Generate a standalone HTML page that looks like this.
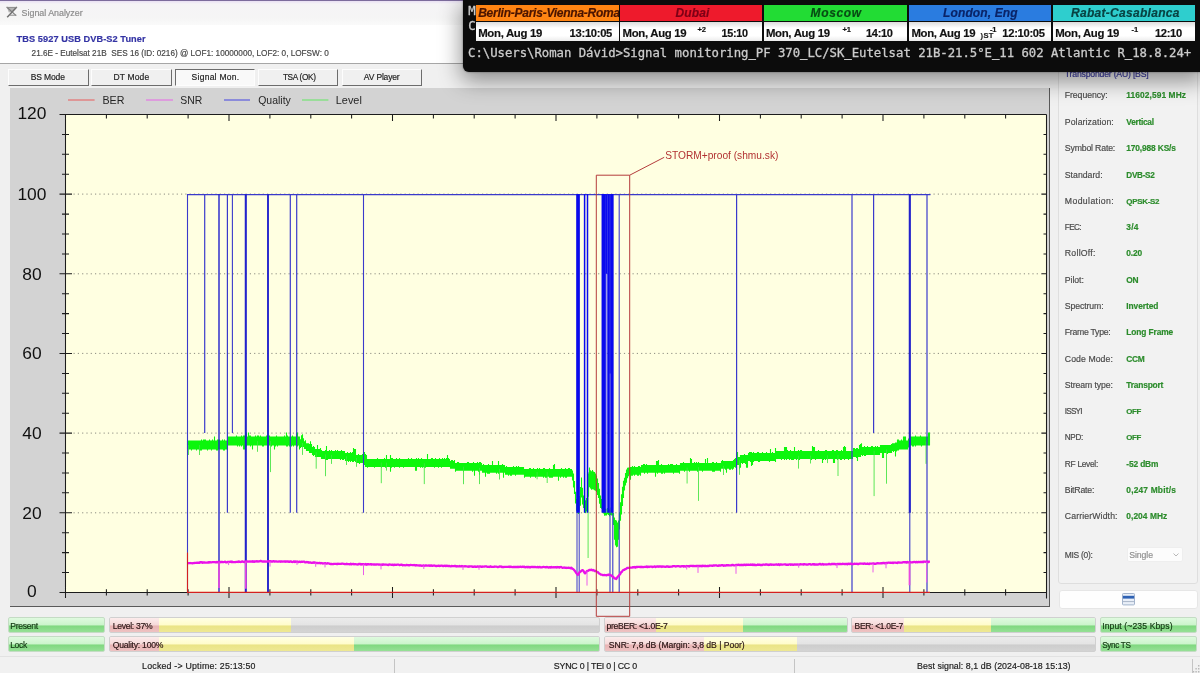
<!DOCTYPE html>
<html><head><meta charset="utf-8"><title>Signal Analyzer</title>
<style>
html,body{margin:0;padding:0}
body{width:1200px;height:673px;position:relative;overflow:hidden;background:#f0f0f0;font-family:"Liberation Sans",Arial,sans-serif;font-size:9px;color:#222}
div{position:absolute;box-sizing:border-box;white-space:pre}
.t{margin:0;-webkit-text-stroke-width:.18px}
#root{left:0;top:0;width:1200px;height:673px;overflow:hidden;will-change:transform}
.clip{width:141px;overflow:hidden}
.mono{-webkit-text-stroke:0.3px #c8c8c8}
#title{left:0;top:0;width:1200px;height:25px;background:linear-gradient(#e9e0f4 0,#f5f4f6 3px,#f5f5f5 70%,#fafafa 100%);border-top:1px solid #7c6c9c}
#hdr{left:0;top:25px;width:1200px;height:39px;background:#fff;border-bottom:1px solid #a6a6a6}
.btn{top:68.6px;height:17.4px;background:#f0f0f0;border:1px solid;border-color:#fdfdfd #6c6c6c #6c6c6c #fdfdfd}
.btn.sel{background:#f9f9f9;border-color:#6c6c6c #fdfdfd #fdfdfd #6c6c6c}
#panel{left:9.6px;top:88.4px;width:1040.5px;height:518.6px;background:#d3d3d3;border-right:1.4px solid #5a5a5a;border-bottom:1.4px solid #5a5a5a}
#chart{position:absolute;left:0;top:0}
#grp{left:1058px;top:66px;width:140px;height:518px;border:1px solid #dedede;border-radius:3px;background:#f2f2f2}
#combo{left:1126.8px;top:547.4px;width:56.6px;height:14.4px;background:#fcfcfc;border:1px solid #eeeeee;border-radius:2px}
#wbtn{left:1059.2px;top:590px;width:138.4px;height:19px;background:#fefefe;border:1px solid #e6e6e6;border-radius:3px}
.pb{height:15.5px;border:1px solid #d0d0d0;border-radius:2px;overflow:hidden;background:linear-gradient(#ebebeb 0,#e4e4e4 48%,#cdcdcd 58%,#d4d4d4 100%)}
.pb i{position:absolute;top:0;height:100%;display:block}
.g{background:linear-gradient(#dffadf 0,#ccf4cc 48%,#80d880 58%,#96e096 100%)}
.pb.g{border-color:#c4dcc4;background:linear-gradient(#dffadf 0,#ccf4cc 48%,#80d880 58%,#96e096 100%)}
.r{background:linear-gradient(#fcecec 0,#f6dada 48%,#e8b4b4 58%,#eec2c2 100%)}
.y{background:linear-gradient(#ffffe4 0,#fffccc 48%,#eae486 58%,#eee894 100%)}
#status{left:0;top:656px;width:1200px;height:17px;border-top:1px solid #e2e2e2;background:#f1f1f1}
.sep{width:1px;background:#c4c4c4;top:659px;height:14px}
#term{left:463px;top:0;width:740px;height:71.7px;background:#0c0c0c;border-radius:0 0 0 6px;box-shadow:0 7px 22px 2px rgba(0,0,0,.42),0 0 2px rgba(0,0,0,.5)}
.cn{top:4.6px;height:16.2px}
.cd{top:22px;height:18.8px;background:linear-gradient(#dcdcdc,#fff 32%,#fff 72%,#ececec)}
</style></head><body><div id="root">
<div id="title"><svg style="position:absolute;left:5px;top:5px" width="14" height="14" viewBox="5 6 14 14"><path d="M7 7.6L16.4 7.6L12.2 11.8L8.8 12.4Z" fill="#b4b4b4"/><path d="M16.8 7L7.2 17.2" stroke="#6e6e6e" stroke-width="1.5" fill="none"/><path d="M6.6 7L16.2 15.6" stroke="#7c7c7c" stroke-width="1.1" fill="none"/><path d="M9.6 15.2H16.2M6.8 7.4H16.6" stroke="#8a8a8a" stroke-width="1" fill="none"/></svg></div>
<div class="t" style='left:21.6px;top:8px;font-size:8.9px;line-height:10px;color:#8c8c8c;letter-spacing:-0.013px'>Signal Analyzer</div>
<div id="hdr"></div>
<div class="t" style='left:16.6px;top:34px;font-size:9.2px;line-height:10px;color:#3434a4;letter-spacing:0.083px;font-weight:bold'>TBS 5927 USB DVB-S2 Tuner</div>
<div class="t" style='left:31.6px;top:49px;font-size:8.2px;line-height:9px;color:#484848'>21.6E - Eutelsat 21B  SES 16 (ID: 0216) @ LOF1: 10000000, LOF2: 0, LOFSW: 0</div>
<div class="btn" style="left:7.6px;width:81.0px"></div><div class="t" style='left:30.7px;top:72px;font-size:8.5px;line-height:10px;color:#222;letter-spacing:-0.118px'>BS Mode</div><div class="btn" style="left:91px;width:80.6px"></div><div class="t" style='left:113.4px;top:72px;font-size:8.5px;line-height:10px;color:#222;letter-spacing:0.167px'>DT Mode</div><div class="btn sel" style="left:174.8px;width:80.39999999999998px"></div><div class="t" style='left:191.6px;top:72px;font-size:8.5px;line-height:10px;color:#222;letter-spacing:0.258px'>Signal Mon.</div><div class="btn" style="left:258.4px;width:80.0px"></div><div class="t" style='left:282.9px;top:73px;font-size:8.24px;line-height:9px;color:#222;letter-spacing:-0.300px'>TSA (OK)</div><div class="btn" style="left:341.8px;width:80.19999999999999px"></div><div class="t" style='left:363.8px;top:72px;font-size:8.5px;line-height:10px;color:#222;letter-spacing:-0.161px'>AV Player</div>
<div id="panel"></div>
<div id="grp"></div>
<div class="t" style='left:1064.8px;top:90px;font-size:8.7px;line-height:10px;color:#4a4a4a;letter-spacing:-0.070px'>Frequency:</div><div class="t" style='left:1126.3px;top:90px;font-size:8.4px;line-height:10px;color:#2c8c2c;letter-spacing:0.082px;font-weight:bold'>11602,591 MHz</div><div class="t" style='left:1064.8px;top:117px;font-size:8.7px;line-height:10px;color:#4a4a4a;letter-spacing:0.095px'>Polarization:</div><div class="t" style='left:1126.3px;top:117px;font-size:8.4px;line-height:10px;color:#2c8c2c;letter-spacing:-0.295px;font-weight:bold'>Vertical</div><div class="t" style='left:1064.8px;top:143px;font-size:8.7px;line-height:10px;color:#4a4a4a;letter-spacing:-0.153px'>Symbol Rate:</div><div class="t" style='left:1126.3px;top:143px;font-size:8.4px;line-height:10px;color:#2c8c2c;letter-spacing:-0.142px;font-weight:bold'>170,988 KS/s</div><div class="t" style='left:1064.8px;top:170px;font-size:8.7px;line-height:10px;color:#4a4a4a;letter-spacing:0.013px'>Standard:</div><div class="t" style='left:1126.3px;top:171px;font-size:8.19px;line-height:9px;color:#2c8c2c;letter-spacing:-0.300px;font-weight:bold'>DVB-S2</div><div class="t" style='left:1064.8px;top:196px;font-size:8.7px;line-height:10px;color:#4a4a4a;letter-spacing:0.388px'>Modulation:</div><div class="t" style='left:1126.3px;top:197px;font-size:7.98px;line-height:9px;color:#2c8c2c;letter-spacing:-0.300px;font-weight:bold'>QPSK-S2</div><div class="t" style='left:1064.8px;top:223px;font-size:8.18px;line-height:9px;color:#4a4a4a;letter-spacing:-0.603px'>FEC:</div><div class="t" style='left:1126.3px;top:222px;font-size:8.4px;line-height:10px;color:#2c8c2c;letter-spacing:0.177px;font-weight:bold'>3/4</div><div class="t" style='left:1064.8px;top:248px;font-size:8.7px;line-height:10px;color:#4a4a4a;letter-spacing:0.265px'>RollOff:</div><div class="t" style='left:1126.3px;top:248px;font-size:8.4px;line-height:10px;color:#2c8c2c;letter-spacing:-0.175px;font-weight:bold'>0.20</div><div class="t" style='left:1064.8px;top:275px;font-size:8.7px;line-height:10px;color:#4a4a4a;letter-spacing:-0.060px'>Pilot:</div><div class="t" style='left:1126.3px;top:275px;font-size:8.39px;line-height:10px;color:#2c8c2c;letter-spacing:-0.300px;font-weight:bold'>ON</div><div class="t" style='left:1064.8px;top:301px;font-size:8.7px;line-height:10px;color:#4a4a4a;letter-spacing:-0.105px'>Spectrum:</div><div class="t" style='left:1126.3px;top:301px;font-size:8.4px;line-height:10px;color:#2c8c2c;letter-spacing:-0.066px;font-weight:bold'>Inverted</div><div class="t" style='left:1064.8px;top:327px;font-size:8.7px;line-height:10px;color:#4a4a4a;letter-spacing:-0.268px'>Frame Type:</div><div class="t" style='left:1126.3px;top:327px;font-size:8.4px;line-height:10px;color:#2c8c2c;letter-spacing:-0.109px;font-weight:bold'>Long Frame</div><div class="t" style='left:1064.8px;top:354px;font-size:8.7px;line-height:10px;color:#4a4a4a;letter-spacing:0.081px'>Code Mode:</div><div class="t" style='left:1126.3px;top:354px;font-size:8.39px;line-height:10px;color:#2c8c2c;letter-spacing:-0.300px;font-weight:bold'>CCM</div><div class="t" style='left:1064.8px;top:380px;font-size:8.7px;line-height:10px;color:#4a4a4a;letter-spacing:-0.100px'>Stream type:</div><div class="t" style='left:1126.3px;top:380px;font-size:8.4px;line-height:10px;color:#2c8c2c;letter-spacing:-0.203px;font-weight:bold'>Transport</div><div class="t" style='left:1064.8px;top:407px;font-size:8.18px;line-height:9px;color:#4a4a4a;letter-spacing:-0.797px'>ISSYI</div><div class="t" style='left:1126.3px;top:407px;font-size:7.9px;line-height:9px;color:#2c8c2c;letter-spacing:-0.378px;font-weight:bold'>OFF</div><div class="t" style='left:1064.8px;top:433px;font-size:8.18px;line-height:9px;color:#4a4a4a;letter-spacing:-0.348px'>NPD:</div><div class="t" style='left:1126.3px;top:433px;font-size:7.9px;line-height:9px;color:#2c8c2c;letter-spacing:-0.378px;font-weight:bold'>OFF</div><div class="t" style='left:1064.8px;top:459px;font-size:8.39px;line-height:10px;color:#4a4a4a;letter-spacing:-0.300px'>RF Level:</div><div class="t" style='left:1126.3px;top:459px;font-size:8.4px;line-height:10px;color:#2c8c2c;letter-spacing:-0.146px;font-weight:bold'>-52 dBm</div><div class="t" style='left:1064.8px;top:485px;font-size:8.7px;line-height:10px;color:#4a4a4a;letter-spacing:-0.201px'>BitRate:</div><div class="t" style='left:1126.3px;top:485px;font-size:8.4px;line-height:10px;color:#2c8c2c;letter-spacing:0.184px;font-weight:bold'>0,247 Mbit/s</div><div class="t" style='left:1064.8px;top:511px;font-size:8.7px;line-height:10px;color:#4a4a4a;letter-spacing:0.130px'>CarrierWidth:</div><div class="t" style='left:1126.3px;top:511px;font-size:8.4px;line-height:10px;color:#2c8c2c;letter-spacing:0.059px;font-weight:bold'>0,204 MHz</div><div class="t" style='left:1064.8px;top:550px;font-size:8.46px;line-height:10px;color:#4a4a4a;letter-spacing:-0.300px'>MIS (0):</div><div class="t" style='left:1064.8px;top:69px;font-size:8.7px;line-height:10px;color:#3a3aa0;letter-spacing:-0.207px'>Transponder (AU) [BS]</div>
<div id="combo"><svg style="position:absolute;right:3.5px;top:4.5px" width="6" height="4" viewBox="0 0 6 4"><path d="M0.5 0.5 L3 3 L5.5 0.5" stroke="#b0b0b0" stroke-width="0.9" fill="none"/></svg></div>
<div class="t" style='left:1129.2px;top:550px;font-size:8.7px;line-height:10px;color:#909090;letter-spacing:-0.065px'>Single</div>
<div id="wbtn"><svg style="position:absolute;left:61.6px;top:2.4px" width="13" height="12.4" viewBox="0 0 13 12.4"><rect x="0.5" y="0.5" width="12" height="11.4" rx="0.8" fill="#e9eff8" stroke="#a3b4cc"/><rect x="0.9" y="2.8" width="11.2" height="2.8" fill="#2f62b4"/><path d="M1 8.6H12" stroke="#a9b6c8"/></svg></div>
<svg id="chart" width="1200" height="673" viewBox="0 0 1200 673">
<rect x="65.5" y="114.5" width="981.0" height="477.9" fill="#ffffe1"/>
<path d="M73.5 512.8H1041.5M73.5 433.1H1041.5M73.5 353.4H1041.5M73.5 273.8H1041.5M73.5 194.1H1041.5" stroke="#8c8c80" stroke-width="1" stroke-dasharray="1.2 3.1" fill="none"/>
<path d="M65.5 114.5H1046.5M65.5 114.5V597.9M1046.5 114.5V598.4M59.5 592.4H1046.5M65.5 586.9V597.9M65.5 114.5V121M106.4 589.2V595.6M106.4 114.5V118.5M147.2 589.2V595.6M147.2 114.5V118.5M188.1 589.2V595.6M188.1 114.5V118.5M229 586.9V597.9M229 114.5V121M269.9 589.2V595.6M269.9 114.5V118.5M310.8 589.2V595.6M310.8 114.5V118.5M351.6 589.2V595.6M351.6 114.5V118.5M392.5 586.9V597.9M392.5 114.5V121M433.4 589.2V595.6M433.4 114.5V118.5M474.2 589.2V595.6M474.2 114.5V118.5M515.1 589.2V595.6M515.1 114.5V118.5M556 586.9V597.9M556 114.5V121M596.9 589.2V595.6M596.9 114.5V118.5M637.8 589.2V595.6M637.8 114.5V118.5M678.6 589.2V595.6M678.6 114.5V118.5M719.5 586.9V597.9M719.5 114.5V121M760.4 589.2V595.6M760.4 114.5V118.5M801.2 589.2V595.6M801.2 114.5V118.5M842.1 589.2V595.6M842.1 114.5V118.5M883 586.9V597.9M883 114.5V121M923.9 589.2V595.6M923.9 114.5V118.5M964.8 589.2V595.6M964.8 114.5V118.5M1005.6 589.2V595.6M1005.6 114.5V118.5M1046.5 586.9V597.9M1046.5 114.5V121M59.5 592.4H72M1041.5 592.4H1046.5M62 572.5H69M1043.5 572.5H1046.5M62 552.6H69M1043.5 552.6H1046.5M62 532.7H69M1043.5 532.7H1046.5M59.5 512.8H72M1041.5 512.8H1046.5M62 492.8H69M1043.5 492.8H1046.5M62 472.9H69M1043.5 472.9H1046.5M62 453H69M1043.5 453H1046.5M59.5 433.1H72M1041.5 433.1H1046.5M62 413.2H69M1043.5 413.2H1046.5M62 393.3H69M1043.5 393.3H1046.5M62 373.4H69M1043.5 373.4H1046.5M59.5 353.4H72M1041.5 353.4H1046.5M62 333.5H69M1043.5 333.5H1046.5M62 313.6H69M1043.5 313.6H1046.5M62 293.7H69M1043.5 293.7H1046.5M59.5 273.8H72M1041.5 273.8H1046.5M62 253.9H69M1043.5 253.9H1046.5M62 234H69M1043.5 234H1046.5M62 214.1H69M1043.5 214.1H1046.5M59.5 194.1H72M1041.5 194.1H1046.5M62 174.2H69M1043.5 174.2H1046.5M62 154.3H69M1043.5 154.3H1046.5M62 134.4H69M1043.5 134.4H1046.5M59.5 114.5H72M1041.5 114.5H1046.5" stroke="#1c1c1c" stroke-width="1.05" fill="none"/>
<g font-family='"Liberation Sans",Arial,sans-serif' font-size="17.4" text-anchor="middle" fill="#111"><text x="31.9" y="596.5">0</text><text x="31.9" y="518.5">20</text><text x="31.9" y="438.8">40</text><text x="31.9" y="359.1">60</text><text x="31.9" y="279.5">80</text><text x="31.9" y="199.8">100</text><text x="31.9" y="119.1">120</text></g>
<path d="M187.5 440.6V449.5M188.5 440.6V449.5M189.5 440.6V449.5M190.5 440.6V449.5M191.5 440.6V450.5M192.5 440.6V449.5M193.5 440.6V449.5M194.5 440.6V449.5M195.5 440.6V449.5M196.5 440.6V450.5M197.5 440.6V449.5M198.5 440.6V449.5M199.5 440.6V450.5M200.5 440.6V450.5M201.5 439.6V450.5M202.5 440.6V449.5M203.5 439.6V449.5M204.5 439.6V449.5M205.5 439.6V449.5M206.5 440.6V449.5M207.5 440.6V450.5M208.5 440.6V449.5M209.5 439.6V449.5M210.5 440.6V449.5M211.5 440.6V450.5M212.5 439.6V449.5M213.5 440.6V449.5M214.5 436.6V449.5M215.5 440.6V449.5M216.5 440.6V450.5M217.5 439.6V450.5M218.5 439.6V449.5M219.5 439.6V449.5M220.5 440.6V449.5M221.5 440.6V449.5M222.5 439.6V449.5M223.5 440.6V450.5M224.5 439.6V450.5M225.5 440.6V449.5M226.5 440.6V449.5M227.5 440.6V449.5M228.5 436.6V445.5M229.5 436.6V445.5M230.5 436.6V445.5M231.5 436.6V445.5M232.5 436.6V445.5M233.5 436.6V445.5M234.5 436.6V445.5M235.5 436.6V445.5M236.5 435.6V445.5M237.5 436.6V446.5M238.5 436.6V445.5M239.5 436.6V446.5M240.5 436.6V445.5M241.5 435.6V446.5M242.5 436.6V445.5M243.5 435.6V449.5M244.5 435.6V449.5M245.5 436.6V445.5M246.5 432.6V446.5M247.5 436.6V445.5M248.5 432.6V445.5M249.5 435.6V445.5M250.5 435.6V446.5M251.5 436.6V445.5M252.5 436.6V449.5M253.5 436.6V445.5M254.5 436.6V445.5M255.5 435.6V445.5M256.5 436.6V445.5M257.5 435.6V445.5M258.5 435.6V445.5M259.5 436.6V445.5M260.5 435.6V445.5M261.5 436.6V445.5M262.5 436.6V446.5M263.5 436.6V446.5M264.5 436.6V445.5M265.5 436.6V445.5M266.5 435.6V445.5M267.5 435.6V445.5M268.5 436.6V446.5M269.5 435.6V445.5M270.5 436.6V445.5M271.5 436.6V446.5M272.5 436.6V445.5M273.5 436.6V445.5M274.5 436.6V449.5M275.5 436.6V446.5M276.5 435.6V445.5M277.5 436.6V446.5M278.5 436.6V445.5M279.5 436.6V445.5M280.5 436.6V445.5M281.5 436.6V445.5M282.5 436.6V445.5M283.5 436.6V445.5M284.5 435.6V445.5M285.5 436.6V445.5M286.5 432.6V446.5M287.5 435.6V446.5M288.5 436.6V445.5M289.5 436.6V446.5M290.5 436.6V445.5M291.5 436.6V446.5M292.5 435.6V445.5M293.5 436.6V446.5M294.5 436.6V445.5M295.5 436.6V445.5M296.5 432.6V445.5M297.5 432.6V446.5M298.5 436.6V445.5M299.5 436.6V449.5M300.5 439.2V447.9M301.5 435.2V446.9M302.5 434.2V446.9M303.5 438.2V446.9M304.5 441.2V448.9M305.5 440.2V448.9M306.5 443.2V450.9M307.5 443.2V450.9M308.5 443.2V450.9M309.5 444.1V452.9M310.5 441.2V452.9M311.5 444.1V452.9M312.5 447.1V454.9M313.5 446.1V455.9M314.5 447.1V454.9M315.5 449.1V456.9M316.5 449.1V456.9M317.5 445.1V456.9M318.5 449.1V456.9M319.5 449.1V456.9M320.5 448.1V456.9M321.5 450.1V458.9M322.5 451.1V458.9M323.5 451.1V458.9M324.5 451.1V458.9M325.5 450.1V459.9M326.5 446.1V459.9M327.5 451.1V459.9M328.5 451.1V458.9M329.5 450.1V458.9M330.5 451.1V458.9M331.5 450.1V458.9M332.5 451.1V458.9M333.5 451.1V458.9M334.5 451.1V458.9M335.5 450.1V458.9M336.5 451.1V458.9M337.5 450.1V458.9M338.5 451.1V458.9M339.5 451.1V458.9M340.5 451.1V459.9M341.5 450.1V458.9M342.5 451.1V459.9M343.5 451.1V459.9M344.5 451.1V458.9M345.5 453.1V460.9M346.5 453.1V460.9M347.5 452.1V460.9M348.5 453.1V461.9M349.5 453.1V460.9M350.5 452.1V461.9M351.5 453.1V460.9M352.5 452.1V461.9M353.5 448.1V461.9M354.5 449.1V460.9M355.5 449.1V461.9M356.5 455.1V462.9M357.5 455.1V462.9M358.5 454.1V462.9M359.5 455.1V463.9M360.5 455.1V462.9M361.5 455.1V462.9M362.5 454.1V462.9M363.5 457.1V468.8M364.5 452.1V464.9M365.5 454.1V466.9M366.5 455.1V466.9M367.5 459.1V467.8M368.5 459.1V466.9M369.5 459.1V466.9M370.5 459.1V466.9M371.5 459.1V466.9M372.5 459.1V466.9M373.5 459.1V466.9M374.5 459.1V467.8M375.5 459.1V466.9M376.5 459.1V466.9M377.5 458.1V466.9M378.5 459.1V466.9M379.5 459.1V466.9M380.5 459.1V466.9M381.5 459.1V467.8M382.5 459.1V466.9M383.5 459.1V466.9M384.5 458.1V466.9M385.5 459.1V467.8M386.5 455.1V466.9M387.5 459.1V466.9M388.5 459.1V466.9M389.5 459.1V466.9M390.5 455.1V471.8M391.5 458.1V467.8M392.5 458.1V466.9M393.5 459.1V466.9M394.5 459.1V467.8M395.5 459.1V466.9M396.5 458.1V466.9M397.5 459.1V466.9M398.5 459.1V466.9M399.5 458.1V467.8M400.5 459.1V466.9M401.5 459.1V466.9M402.5 459.1V466.9M403.5 459.1V467.8M404.5 459.1V466.9M405.5 459.1V466.9M406.5 459.1V466.9M407.5 459.1V466.9M408.5 458.1V466.9M409.5 459.1V466.9M410.5 459.1V466.9M411.5 458.1V466.9M412.5 459.1V466.9M413.5 459.1V466.9M414.5 459.1V466.9M415.5 459.1V470.8M416.5 458.1V470.8M417.5 459.1V466.9M418.5 458.1V466.9M419.5 459.1V466.9M420.5 459.1V467.8M421.5 458.1V466.9M422.5 459.1V467.8M423.5 459.1V466.9M424.5 459.1V467.8M425.5 459.1V467.8M426.5 459.1V466.9M427.5 454.1V466.9M428.5 459.1V466.9M429.5 459.1V466.9M430.5 459.1V466.9M431.5 458.1V466.9M432.5 458.1V466.9M433.5 459.1V466.9M434.5 459.1V467.8M435.5 458.1V466.9M436.5 459.1V466.9M437.5 459.1V466.9M438.5 459.1V467.8M439.5 458.1V466.9M440.5 459.1V466.9M441.5 459.1V467.8M442.5 458.1V466.9M443.5 459.1V466.9M444.5 458.1V466.9M445.5 459.1V466.9M446.5 458.1V466.9M447.5 455.1V466.9M448.5 458.1V466.9M449.5 459.1V466.9M450.5 461.1V468.8M451.5 460.1V468.8M452.5 460.1V468.8M453.5 461.1V468.8M454.5 460.1V468.8M455.5 463.1V471.8M456.5 463.1V470.8M457.5 462.1V470.8M458.5 462.1V470.8M459.5 463.1V470.8M460.5 463.1V470.8M461.5 463.1V470.8M462.5 463.1V470.8M463.5 463.1V471.8M464.5 463.1V470.8M465.5 463.1V470.8M466.5 463.1V470.8M467.5 462.1V470.8M468.5 462.1V470.8M469.5 463.1V470.8M470.5 463.1V470.8M471.5 463.1V470.8M472.5 463.1V471.8M473.5 462.1V470.8M474.5 463.1V475.8M475.5 463.1V470.8M476.5 463.1V470.8M477.5 462.1V470.8M478.5 463.1V471.8M479.5 462.1V474.8M480.5 462.1V470.8M481.5 463.1V470.8M482.5 465.1V472.8M483.5 464.1V472.8M484.5 465.1V472.8M485.5 465.1V476.8M486.5 465.1V472.8M487.5 465.1V473.8M488.5 464.1V473.8M489.5 465.1V473.8M490.5 465.1V472.8M491.5 465.1V472.8M492.5 461.1V472.8M493.5 465.1V472.8M494.5 465.1V472.8M495.5 465.1V472.8M496.5 465.1V473.8M497.5 465.1V472.8M498.5 461.1V473.8M499.5 465.1V472.8M500.5 465.1V472.8M501.5 465.1V472.8M502.5 464.1V472.8M503.5 465.1V477.8M504.5 465.1V472.8M505.5 467V474.8M506.5 466.1V474.8M507.5 467V474.8M508.5 467V475.8M509.5 467V474.8M510.5 467V475.8M511.5 467V475.8M512.5 467V474.8M513.5 466.1V474.8M514.5 467V474.8M515.5 467V475.8M516.5 466.1V474.8M517.5 467V474.8M518.5 466.1V474.8M519.5 467V474.8M520.5 467V474.8M521.5 467V474.8M522.5 467V474.8M523.5 467V474.8M524.5 469V477.8M525.5 469V476.8M526.5 469V476.8M527.5 469V476.8M528.5 469V476.8M529.5 468V476.8M530.5 468V477.8M531.5 469V476.8M532.5 469V476.8M533.5 468V476.8M534.5 469V476.8M535.5 469V477.8M536.5 469V476.8M537.5 468V476.8M538.5 469V476.8M539.5 468V476.8M540.5 469V476.8M541.5 469V476.8M542.5 469V476.8M543.5 468V477.8M544.5 468V476.8M545.5 469V477.8M546.5 469V477.8M547.5 469V476.8M548.5 469V476.8M549.5 468V477.8M550.5 469V477.8M551.5 469V477.8M552.5 469V477.8M553.5 465.1V476.8M554.5 464.1V476.8M555.5 469V476.8M556.5 469V476.8M557.5 469V476.8M558.5 469V480.8M559.5 469V476.8M560.5 469V477.8M561.5 468V476.8M562.5 469V476.8M563.5 469V477.8M564.5 469V476.8M565.5 468V477.8M566.5 469V477.8M567.5 469V476.8M568.5 468V476.8M569.5 468V476.8M570.5 469V476.8M571.5 469V476.8M572.5 470.4V480.4M573.5 473.5V487.5M574.5 480.9V494M575.5 491.7V503.4M576.5 499.1V510.8M577.5 503.7V513.1M578.5 503.5V513.9M579.5 496V510.6M580.5 486.9V505.8M581.5 477.6V497.6M582.5 487.7V504.5M583.5 495.6V508.1M584.5 501.9V512.6M585.5 500.3V512.9M586.5 498V511.5M587.5 488V505.9M588.5 473.5V496.8M589.5 467.5V487.3M590.5 470.3V488.6M591.5 471.2V489.7M592.5 469.9V489.3M593.5 471.5V489.4M594.5 471.9V490.3M595.5 473.6V490.8M596.5 475.4V492.1M597.5 478.5V495M598.5 483V497.9M599.5 488.7V503.7M600.5 495.6V507.9M601.5 499.1V508.8M602.5 503.4V512.6M603.5 506V513.6M604.5 508.1V515.8M605.5 508.7V515.4M606.5 508.7V515.4M607.5 507.9V514.2M608.5 509.3V515.1M609.5 509.4V516.2M610.5 507.5V515.1M611.5 507.3V515.4M612.5 509.4V515.5M613.5 513V525.1M614.5 517.6V539.7M615.5 519.9V545.6M616.5 520.4V547.3M617.5 522.5V546.8M618.5 520.4V539.7M619.5 512.2V529.6M620.5 502.3V520.8M621.5 494.2V514.4M622.5 486.8V505.9M623.5 480.8V498.1M624.5 477.8V490.4M625.5 472.9V485.5M626.5 469.6V482.7M627.5 467.8V478.2M628.5 467.5V476.2M629.5 467.4V474.6M630.5 467V479.8M631.5 467V475.8M632.5 466.1V475.8M633.5 467V474.8M634.5 466.1V475.8M635.5 467V474.8M636.5 467V474.8M637.5 467V475.8M638.5 466.1V475.8M639.5 466.1V474.8M640.5 467V475.8M641.5 465.1V472.8M642.5 465.1V472.8M643.5 464.1V472.8M644.5 464.1V473.8M645.5 465.1V472.8M646.5 464.1V472.8M647.5 465.1V473.8M648.5 465.1V472.8M649.5 465.1V472.8M650.5 465.1V472.8M651.5 465.1V472.8M652.5 465.1V472.8M653.5 465.1V472.8M654.5 465.1V472.8M655.5 465.1V476.8M656.5 461.1V472.8M657.5 461.1V473.8M658.5 460.1V472.8M659.5 465.1V472.8M660.5 465.1V472.8M661.5 464.1V473.8M662.5 465.1V473.8M663.5 465.1V472.8M664.5 465.1V473.8M665.5 465.1V472.8M666.5 465.1V472.8M667.5 465.1V472.8M668.5 464.1V472.8M669.5 465.1V472.8M670.5 464.1V472.8M671.5 464.1V472.8M672.5 464.1V472.8M673.5 465.1V473.8M674.5 465.1V472.8M675.5 465.1V472.8M676.5 464.1V472.8M677.5 465.1V472.8M678.5 465.1V472.8M679.5 465.1V473.8M680.5 463.1V470.8M681.5 463.1V470.8M682.5 463.1V470.8M683.5 462.1V470.8M684.5 463.1V471.8M685.5 463.1V470.8M686.5 463.1V470.8M687.5 463.1V470.8M688.5 463.1V470.8M689.5 463.1V471.8M690.5 458.1V470.8M691.5 459.1V470.8M692.5 463.1V470.8M693.5 463.1V470.8M694.5 462.1V470.8M695.5 463.1V470.8M696.5 462.1V470.8M697.5 463.1V471.8M698.5 462.1V470.8M699.5 463.1V470.8M700.5 463.1V470.8M701.5 463.1V470.8M702.5 463.1V471.8M703.5 463.1V470.8M704.5 463.1V470.8M705.5 459.1V470.8M706.5 463.1V470.8M707.5 458.1V470.8M708.5 463.1V470.8M709.5 463.1V470.8M710.5 463.1V470.8M711.5 463.1V470.8M712.5 462.1V471.8M713.5 462.1V471.8M714.5 463.1V471.8M715.5 463.1V470.8M716.5 462.1V470.8M717.5 463.1V470.8M718.5 463.1V470.8M719.5 463.1V470.8M720.5 463.1V471.8M721.5 461.1V468.8M722.5 460.1V468.8M723.5 461.1V468.8M724.5 461.1V468.8M725.5 461.1V469.8M726.5 461.1V472.8M727.5 461.1V468.8M728.5 461.1V468.8M729.5 461.1V469.8M730.5 461.1V469.8M731.5 461.1V468.8M732.5 461.1V469.8M733.5 460.1V468.8M734.5 459.1V466.9M735.5 458.1V467.8M736.5 453.1V464.9M737.5 452.1V464.9M738.5 457.1V464.9M739.5 457.1V468.8M740.5 455.1V467.8M741.5 455.1V462.9M742.5 455.1V463.9M743.5 455.1V462.9M744.5 454.1V462.9M745.5 455.1V463.9M746.5 455.1V467.8M747.5 455.1V467.8M748.5 453.1V460.9M749.5 452.1V460.9M750.5 452.1V461.9M751.5 452.1V465.9M752.5 453.1V464.9M753.5 452.1V461.9M754.5 453.1V460.9M755.5 453.1V460.9M756.5 453.1V460.9M757.5 452.1V460.9M758.5 452.1V461.9M759.5 453.1V461.9M760.5 453.1V460.9M761.5 453.1V460.9M762.5 452.1V460.9M763.5 453.1V460.9M764.5 453.1V460.9M765.5 453.1V460.9M766.5 452.1V460.9M767.5 453.1V460.9M768.5 453.1V460.9M769.5 453.1V461.9M770.5 449.1V460.9M771.5 453.1V460.9M772.5 452.1V460.9M773.5 453.1V460.9M774.5 453.1V460.9M775.5 448.1V461.9M776.5 451.1V458.9M777.5 451.1V458.9M778.5 451.1V458.9M779.5 451.1V458.9M780.5 451.1V458.9M781.5 451.1V459.9M782.5 451.1V458.9M783.5 451.1V458.9M784.5 447.1V459.9M785.5 447.1V458.9M786.5 447.1V459.9M787.5 450.1V458.9M788.5 451.1V458.9M789.5 451.1V459.9M790.5 450.1V458.9M791.5 451.1V459.9M792.5 451.1V459.9M793.5 451.1V459.9M794.5 447.1V458.9M795.5 451.1V458.9M796.5 451.1V459.9M797.5 451.1V458.9M798.5 450.1V459.9M799.5 451.1V459.9M800.5 450.1V458.9M801.5 450.1V458.9M802.5 451.1V458.9M803.5 451.1V458.9M804.5 451.1V458.9M805.5 451.1V458.9M806.5 451.1V458.9M807.5 451.1V458.9M808.5 451.1V458.9M809.5 451.1V458.9M810.5 451.1V458.9M811.5 451.1V459.9M812.5 446.1V458.9M813.5 447.1V458.9M814.5 447.1V458.9M815.5 451.1V459.9M816.5 451.1V458.9M817.5 451.1V458.9M818.5 450.1V458.9M819.5 451.1V458.9M820.5 451.1V458.9M821.5 451.1V458.9M822.5 451.1V462.9M823.5 451.1V459.9M824.5 451.1V458.9M825.5 450.1V459.9M826.5 450.1V458.9M827.5 451.1V459.9M828.5 451.1V458.9M829.5 451.1V458.9M830.5 451.1V458.9M831.5 451.1V458.9M832.5 450.1V458.9M833.5 450.1V462.9M834.5 451.1V462.9M835.5 451.1V458.9M836.5 450.1V458.9M837.5 450.1V459.9M838.5 451.1V458.9M839.5 451.1V458.9M840.5 451.1V459.9M841.5 450.1V459.9M842.5 451.1V458.9M843.5 447.1V458.9M844.5 446.1V459.9M845.5 447.1V458.9M846.5 451.1V458.9M847.5 451.1V458.9M848.5 451.1V459.9M849.5 451.1V458.9M850.5 451.1V458.9M851.5 451.1V458.9M852.5 451.1V458.9M853.5 448.1V456.9M854.5 448.1V456.9M855.5 449.1V456.9M856.5 448.1V457.9M857.5 448.1V460.9M858.5 449.1V456.9M859.5 445.1V456.9M860.5 444.1V456.9M861.5 443.2V454.9M862.5 447.1V455.9M863.5 447.1V454.9M864.5 446.1V455.9M865.5 447.1V455.9M866.5 447.1V454.9M867.5 446.1V454.9M868.5 447.1V454.9M869.5 447.1V454.9M870.5 447.1V454.9M871.5 446.1V454.9M872.5 446.1V454.9M873.5 447.1V454.9M874.5 447.1V454.9M875.5 446.1V454.9M876.5 447.1V454.9M877.5 446.1V454.9M878.5 447.1V454.9M879.5 447.1V454.9M880.5 445.1V452.9M881.5 445.1V452.9M882.5 445.1V457.9M883.5 445.1V457.9M884.5 445.1V452.9M885.5 445.1V452.9M886.5 445.1V452.9M887.5 445.1V453.9M888.5 445.1V452.9M889.5 445.1V452.9M890.5 445.1V452.9M891.5 444.1V452.9M892.5 443.2V450.9M893.5 443.2V451.9M894.5 443.2V450.9M895.5 442.6V456.5M896.5 442.6V451.5M897.5 439.6V450.5M898.5 439.6V450.5M899.5 440.6V449.5M900.5 440.6V449.5M901.5 439.6V449.5M902.5 440.6V449.5M903.5 436.6V449.5M904.5 436.6V449.5M905.5 436.6V449.5M906.5 440.6V449.5M907.5 440.6V449.5M908.5 438.6V447.5M909.5 436.6V445.5M910.5 436.6V445.5M911.5 436.6V445.5M912.5 436.6V446.5M913.5 436.6V446.5M914.5 436.6V445.5M915.5 435.6V446.5M916.5 436.6V445.5M917.5 436.6V445.5M918.5 436.6V445.5M919.5 436.6V445.5M920.5 435.6V445.5M921.5 436.6V446.5M922.5 436.6V445.5M923.5 436.6V445.5M924.5 436.6V445.5M925.5 436.6V445.5M926.5 436.6V445.5M927.5 436.6V445.5M928.5 432.6V445.5M929.5 432.6V445.5" stroke="#0cf60c" stroke-width="1.08" fill="none"/>
<path d="M188.5 445V455M199.5 445V455M257.5 441.1V451.8M270.5 441.1V472.1M302.5 443V454.9M316.2 452.3V468.7M325.5 454.3V476.2M331.5 454.8V463.9M346.5 456.2V465M356.5 458V466.8M381.3 462.5V483.2M386.5 462.7V470.6M424.3 463.3V484.1M463.5 466.7V484.2M479.5 467.8V484.1M499.5 468.8V479.5M537.1 472.1V479.3M547.2 472.2V483M687.1 467.6V483.5M698.5 467.1V500.9M723.5 465.8V475M739.5 460.1V474.8M798.5 455.8V468.6M810.5 455.6V463.5M827.5 455.2V463.1M838 454.9V476M874.1 450.7V496.1M886.5 449.4V483.7M926 441.5V463.8M588.1 472V558" stroke="#3fe33f" stroke-width="1" fill="none" opacity=".85"/>
<g stroke="#3a3acb" fill="none"><path d="M187.0 194.5H930.5" stroke-width="1.25"/><line x1="187.5" y1="194.1" x2="187.5" y2="592.4" stroke-width="1.1"/><line x1="204.7" y1="194.1" x2="204.7" y2="433.1" stroke-width="1.2"/><line x1="227.4" y1="194.1" x2="227.4" y2="512.8" stroke-width="1.2"/><line x1="232.4" y1="194.1" x2="232.4" y2="433.1" stroke-width="1.1"/><line x1="290.3" y1="194.1" x2="290.3" y2="512.8" stroke-width="1.2"/><line x1="296.7" y1="194.1" x2="296.7" y2="512.8" stroke-width="1.2"/><line x1="363.5" y1="194.1" x2="363.5" y2="512.8" stroke-width="1.1"/><line x1="577" y1="194.1" x2="577" y2="592.4" stroke-width="1"/><line x1="579.2" y1="194.1" x2="579.2" y2="592.4" stroke-width="1"/><line x1="610" y1="194.1" x2="610" y2="592.4" stroke-width="1.1"/><line x1="612.8" y1="194.1" x2="612.8" y2="592.4" stroke-width="1.1"/><line x1="619.2" y1="194.1" x2="619.2" y2="592.4" stroke-width="1.1"/><line x1="736.6" y1="194.1" x2="736.6" y2="512.8" stroke-width="1.2"/><line x1="852" y1="194.1" x2="852" y2="592.4" stroke-width="1.2"/><line x1="873.6" y1="194.1" x2="873.6" y2="433.1" stroke-width="1.2"/><line x1="909.8" y1="194.1" x2="909.8" y2="592.4" stroke-width="1.1"/><line x1="927" y1="194.1" x2="927" y2="592.4" stroke-width="1.2"/></g>
<g stroke="#2222cc" fill="none"><line x1="219" y1="194.1" x2="219" y2="592.4" stroke-width="1.4"/><line x1="245.8" y1="194.1" x2="245.8" y2="592.4" stroke-width="2.1"/><line x1="268" y1="194.1" x2="268" y2="592.4" stroke-width="1.9"/><line x1="909.8" y1="194.1" x2="909.8" y2="512.8" stroke-width="2.1"/></g>
<g stroke="#7a7aee" fill="none" opacity=".75"><line x1="606.5" y1="194.1" x2="606.5" y2="512.8" stroke-width="1.6"/><line x1="610.1" y1="194.1" x2="610.1" y2="512.8" stroke-width="1.0"/></g>
<g stroke="#0a0aee" fill="none"><line x1="578" y1="194.1" x2="578" y2="512.8" stroke-width="3.4"/><line x1="584.6" y1="194.1" x2="584.6" y2="512.8" stroke-width="1.5"/><line x1="587.5" y1="194.1" x2="587.5" y2="512.8" stroke-width="1.5"/><line x1="603.7" y1="194.1" x2="603.7" y2="512.8" stroke-width="4.3"/><line x1="608.5" y1="194.1" x2="608.5" y2="512.8" stroke-width="2.4"/><line x1="612" y1="194.1" x2="612" y2="512.8" stroke-width="3.0"/><line x1="606.5" y1="194.1" x2="606.5" y2="273.8" stroke-width="1.8"/><line x1="610.1" y1="194.1" x2="610.1" y2="373.4" stroke-width="1.2"/></g>
<path d="M187.5 563.4 188.3 563.1 189.1 563.1 189.9 563.2 190.7 563 191.5 563.2 192.3 563.3 193.1 563 193.9 563.2 194.7 562.8 195.5 562.9 196.3 562.8 197.1 562.6 197.9 562.8 198.7 562.6 199.5 562.9 200.3 562.2 201.1 562.5 201.9 562.1 202.7 562.8 203.5 562.4 204.3 562.3 205.1 562.6 205.9 562.7 206.7 562.6 207.5 562.6 208.3 562.2 209.1 562.6 209.9 562.1 210.7 562.4 211.5 562.3 212.3 562.2 213.1 562.2 213.9 562.1 214.7 562.2 215.5 562.3 216.3 562 217.1 562.4 217.9 562 218.7 562 219.5 561.9 220.3 562.3 221.1 561.9 221.9 561.8 222.7 562.1 223.5 562.2 224.3 562 225.1 561.7 225.9 562.3 226.7 562.4 227.5 562 228.3 561.9 229.1 561.8 229.9 562 230.7 561.6 231.5 562.1 232.3 561.7 233.1 562.2 233.9 562.2 234.7 562.1 235.5 562.1 236.3 561.8 237.1 561.8 237.9 562 238.7 561.4 239.5 561.8 240.3 562 241.1 561.9 241.9 561.5 242.7 561.4 243.5 561.9 244.3 562 245.1 561.4 245.9 561.8 246.7 561.3 247.5 561.6 248.3 561.5 249.1 561.7 249.9 561.3 250.7 561.6 251.5 561.6 252.3 561.2 253.1 561.8 253.9 561.3 254.7 561.8 255.5 561.3 256.3 561.5 257.1 561.1 257.9 561.7 258.7 561.3 259.5 561.4 260.3 561 261.1 561 261.9 561.3 262.7 561.6 263.5 561.5 264.3 561.5 265.1 561.4 265.9 561.6 266.7 561.6 267.5 561.2 268.3 561.3 269.1 561.6 269.9 561.1 270.7 561.6 271.5 561.4 272.3 561.7 273.1 561.2 273.9 561.2 274.7 561.6 275.5 561.3 276.3 561.3 277.1 561.7 277.9 561.6 278.7 561.5 279.5 561.3 280.3 561.8 281.1 561.4 281.9 561.5 282.7 561.6 283.5 561.5 284.3 561.3 285.1 561.8 285.9 561.3 286.7 561.7 287.5 561.4 288.3 561.4 289.1 561.9 289.9 561.4 290.7 561.3 291.5 561.8 292.3 562 293.1 561.9 293.9 561.3 294.7 562 295.5 561.4 296.3 561.9 297.1 561.5 297.9 562 298.7 562 299.5 561.6 300.3 562 301.1 561.9 301.9 561.6 302.7 561.8 303.5 561.7 304.3 561.7 305.1 562.4 305.9 562.3 306.7 562 307.5 562.1 308.3 562.6 309.1 562.3 309.9 562.6 310.7 562.5 311.5 562.8 312.3 562.9 313.1 562.3 313.9 562.8 314.7 562.4 315.5 563 316.3 562.8 317.1 563.1 317.9 563 318.7 563.2 319.5 562.9 320.3 563.3 321.1 563 321.9 563.2 322.7 563.5 323.5 563.4 324.3 563.4 325.1 563.1 325.9 563.6 326.7 563.7 327.5 563.2 328.3 563.3 329.1 563.5 329.9 563.9 330.7 564 331.5 563.9 332.3 564.1 333.1 564.1 333.9 563.8 334.7 563.9 335.5 563.8 336.3 563.9 337.1 564.2 337.9 563.7 338.7 563.8 339.5 563.9 340.3 563.9 341.1 563.8 341.9 563.6 342.7 563.7 343.5 563.8 344.3 564 345.1 564.1 345.9 564.1 346.7 563.7 347.5 564.1 348.3 564.1 349.1 564.1 349.9 564.3 350.7 563.7 351.5 564.4 352.3 564 353.1 563.8 353.9 564.3 354.7 564.1 355.5 564.2 356.3 564.4 357.1 564.4 357.9 564.5 358.7 564 359.5 564 360.3 564 361.1 564.6 361.9 564.1 362.7 564.4 363.5 564.2 364.3 564.3 365.1 564.5 365.9 564 366.7 564.7 367.5 564.2 368.3 564.1 369.1 564.4 369.9 564.3 370.7 564.1 371.5 564.6 372.3 564.4 373.1 564.3 373.9 564.6 374.7 564.3 375.5 564.6 376.3 564.5 377.1 564.4 377.9 564.4 378.7 564.7 379.5 564.5 380.3 564.6 381.1 564.8 381.9 564.5 382.7 564.8 383.5 564.3 384.3 564.7 385.1 564.5 385.9 564.7 386.7 564.7 387.5 564.9 388.3 565 389.1 564.4 389.9 564.7 390.7 564.7 391.5 564.8 392.3 564.6 393.1 565 393.9 565.1 394.7 564.6 395.5 564.9 396.3 564.8 397.1 564.6 397.9 564.6 398.7 564.6 399.5 565.2 400.3 565 401.1 564.7 401.9 564.7 402.7 565.3 403.5 565.2 404.3 565.2 405.1 565.3 405.9 565.2 406.7 564.9 407.5 565.1 408.3 565.1 409.1 565.4 409.9 565.2 410.7 564.8 411.5 565 412.3 565.2 413.1 565.2 413.9 565 414.7 565.1 415.5 565.5 416.3 565.2 417.1 565.4 417.9 565.3 418.7 565.5 419.5 565.5 420.3 565.5 421.1 565.5 421.9 565.8 422.7 565.7 423.5 565.4 424.3 565.8 425.1 565.7 425.9 565.4 426.7 565.7 427.5 565.7 428.3 565.7 429.1 565.3 429.9 565.9 430.7 565.5 431.5 565.4 432.3 565.9 433.1 565.7 433.9 565.5 434.7 565.6 435.5 565.8 436.3 566.1 437.1 565.8 437.9 565.9 438.7 565.6 439.5 566 440.3 565.9 441.1 565.7 441.9 565.7 442.7 566 443.5 566 444.3 565.9 445.1 565.6 445.9 566.2 446.7 565.6 447.5 565.8 448.3 566.1 449.1 565.9 449.9 566.2 450.7 566.4 451.5 565.9 452.3 566.2 453.1 566.1 453.9 566.1 454.7 565.9 455.5 566 456.3 566.5 457.1 566.2 457.9 566.3 458.7 566.3 459.5 566 460.3 566.4 461.1 566.3 461.9 566 462.7 566.4 463.5 566.4 464.3 566.4 465.1 566.2 465.9 566.3 466.7 566.3 467.5 566.5 468.3 566.8 469.1 566.4 469.9 566.5 470.7 566.3 471.5 566.3 472.3 566.8 473.1 566.7 473.9 566.9 474.7 566.3 475.5 566.8 476.3 566.9 477.1 566.4 477.9 566.5 478.7 566.9 479.5 566.5 480.3 566.5 481.1 566.6 481.9 566.9 482.7 566.5 483.5 566.7 484.3 566.6 485.1 566.3 485.9 566.4 486.7 566.4 487.5 566.9 488.3 566.8 489.1 566.7 489.9 567 490.7 566.3 491.5 566.9 492.3 566.9 493.1 566.9 493.9 566.9 494.7 566.5 495.5 566.7 496.3 566.7 497.1 566.8 497.9 567.1 498.7 566.9 499.5 566.5 500.3 566.6 501.1 566.5 501.9 567 502.7 567 503.5 567.1 504.3 566.8 505.1 566.9 505.9 566.9 506.7 566.8 507.5 566.8 508.3 566.9 509.1 566.6 509.9 567.1 510.7 566.6 511.5 566.8 512.3 567.2 513.1 567 513.9 566.9 514.7 567 515.5 566.9 516.3 567 517.1 567.1 517.9 566.7 518.7 567.1 519.5 566.8 520.3 566.7 521.1 566.9 521.9 567 522.7 566.7 523.5 567 524.3 566.7 525.1 567.3 525.9 567.1 526.7 566.9 527.5 567.3 528.3 566.8 529.1 567.3 529.9 567 530.7 567.3 531.5 566.8 532.3 567 533.1 566.9 533.9 567.1 534.7 567 535.5 567 536.3 567.2 537.1 567.3 537.9 566.9 538.7 567.4 539.5 566.8 540.3 567.3 541.1 567.4 541.9 567.4 542.7 567 543.5 566.8 544.3 567.2 545.1 567.1 545.9 567.4 546.7 566.9 547.5 567.1 548.3 567.5 549.1 567.5 549.9 567.1 550.7 567.6 551.5 567 552.3 567.4 553.1 567.4 553.9 567.2 554.7 567.4 555.5 567.2 556.3 567.5 557.1 567 557.9 567.4 558.7 567.1 559.5 567.6 560.3 567.1 561.1 567 561.9 567.5 562.7 567.8 563.5 567.6 564.3 567.5 565.1 567.8 565.9 567.7 566.7 568 567.5 567.8 568.3 567.7 569.1 568 569.9 567.8 570.7 568.3 571.5 567.8 572.3 568.7 573.1 569 573.9 569.8 574.7 570.7 575.5 571.9 576.3 573.1 577.1 574.1 577.9 575 578.7 574 579.5 572.3 580.3 571.8 581.1 571.1 581.9 570.4 582.7 570.2 583.5 570.9 584.3 572.5 585.1 573.4 585.9 572.6 586.7 571.3 587.5 570.8 588.3 570.8 589.1 569.9 589.9 570.1 590.7 569.8 591.5 569.7 592.3 570.3 593.1 570 593.9 570.4 594.7 571 595.5 570.9 596.3 571.2 597.1 572 597.9 572.2 598.7 573.3 599.5 573.5 600.3 574.3 601.1 574.7 601.9 574.6 602.7 575.2 603.5 575.1 604.3 575 605.1 575.1 605.9 575.1 606.7 575.3 607.5 574.8 608.3 575 609.1 574.5 609.9 574.8 610.7 575 611.5 575.8 612.3 576.4 613.1 576.8 613.9 577.8 614.7 578.5 615.5 578.5 616.3 579 617.1 577.6 617.9 576.5 618.7 575.7 619.5 574.9 620.3 573.9 621.1 572.3 621.9 571.8 622.7 570.5 623.5 569.8 624.3 569.8 625.1 569.1 625.9 569 626.7 568.3 627.5 567.9 628.3 567.8 629.1 567.9 629.9 567.7 630.7 567.7 631.5 567.7 632.3 567.6 633.1 567.1 633.9 567.3 634.7 567 635.5 567.6 636.3 566.8 637.1 567.1 637.9 566.8 638.7 566.9 639.5 566.8 640.3 567.1 641.1 566.7 641.9 567.1 642.7 567 643.5 567.2 644.3 566.9 645.1 566.8 645.9 567 646.7 566.5 647.5 567.1 648.3 566.7 649.1 567 649.9 566.7 650.7 566.6 651.5 566.6 652.3 567.1 653.1 566.9 653.9 566.7 654.7 566.4 655.5 567 656.3 566.6 657.1 566.5 657.9 566.4 658.7 566.8 659.5 566.4 660.3 566.7 661.1 566.3 661.9 567 662.7 566.3 663.5 566.7 664.3 566.7 665.1 566.9 665.9 566.8 666.7 566.4 667.5 566.4 668.3 566.8 669.1 566.6 669.9 566.8 670.7 566.7 671.5 566.7 672.3 566.6 673.1 566.1 673.9 566.1 674.7 566.2 675.5 566.5 676.3 566.4 677.1 566.2 677.9 566.1 678.7 566.2 679.5 566.3 680.3 566.6 681.1 566.3 681.9 566.1 682.7 566.1 683.5 566.6 684.3 566.2 685.1 566.4 685.9 566.5 686.7 566 687.5 566.2 688.3 566.1 689.1 566.5 689.9 566 690.7 565.9 691.5 565.9 692.3 566 693.1 566 693.9 566 694.7 566.1 695.5 566.2 696.3 565.9 697.1 566 697.9 565.9 698.7 566.3 699.5 565.8 700.3 566.1 701.1 565.8 701.9 566.3 702.7 565.7 703.5 565.8 704.3 566.2 705.1 565.7 705.9 566.1 706.7 566.1 707.5 565.9 708.3 566.1 709.1 565.8 709.9 565.5 710.7 565.7 711.5 565.6 712.3 565.8 713.1 565.5 713.9 565.5 714.7 565.5 715.5 565.3 716.3 565.4 717.1 565.7 717.9 565.9 718.7 565.4 719.5 565.3 720.3 565.6 721.1 565.4 721.9 565.2 722.7 565.2 723.5 565.8 724.3 565.4 725.1 565.7 725.9 565.6 726.7 565.1 727.5 565.4 728.3 565.2 729.1 565.3 729.9 565.3 730.7 565.4 731.5 565.3 732.3 564.9 733.1 565 733.9 565.3 734.7 565.4 735.5 565.2 736.3 564.9 737.1 565 737.9 564.9 738.7 564.7 739.5 565.2 740.3 564.8 741.1 565.2 741.9 564.7 742.7 565.1 743.5 565.1 744.3 564.6 745.1 565 745.9 565.1 746.7 564.6 747.5 564.8 748.3 564.6 749.1 564.9 749.9 564.9 750.7 564.5 751.5 564.8 752.3 564.5 753.1 565.1 753.9 564.6 754.7 565.1 755.5 564.8 756.3 565.2 757.1 565 757.9 564.5 758.7 564.8 759.5 564.6 760.3 565 761.1 564.9 761.9 565.1 762.7 564.7 763.5 564.5 764.3 564.7 765.1 564.8 765.9 564.4 766.7 564.5 767.5 564.6 768.3 565 769.1 564.6 769.9 564.8 770.7 564.4 771.5 564.8 772.3 564.6 773.1 564.6 773.9 564.8 774.7 564.7 775.5 564.6 776.3 564.4 777.1 564.7 777.9 564.8 778.7 564.3 779.5 565 780.3 564.4 781.1 564.5 781.9 564.6 782.7 564.7 783.5 564.5 784.3 564.3 785.1 564.5 785.9 564.4 786.7 564.9 787.5 564.7 788.3 564.9 789.1 564.3 789.9 564.3 790.7 564.8 791.5 564.5 792.3 564.5 793.1 564.9 793.9 564.6 794.7 564.4 795.5 564.5 796.3 564.7 797.1 564.4 797.9 564.7 798.7 564.5 799.5 564.6 800.3 564.2 801.1 564.4 801.9 564.3 802.7 564.4 803.5 564.6 804.3 564.1 805.1 564.3 805.9 564.3 806.7 564.6 807.5 564.7 808.3 564.4 809.1 564.2 809.9 564.2 810.7 564.5 811.5 564.6 812.3 564.4 813.1 564.1 813.9 564.6 814.7 564.2 815.5 564.6 816.3 564.5 817.1 564.6 817.9 564.5 818.7 564.4 819.5 564 820.3 564 821.1 564.5 821.9 564.4 822.7 563.9 823.5 564.5 824.3 564.4 825.1 564.3 825.9 564.5 826.7 564.4 827.5 564.3 828.3 564.3 829.1 563.9 829.9 564.3 830.7 564.4 831.5 563.9 832.3 564.2 833.1 563.9 833.9 564 834.7 563.9 835.5 564.3 836.3 564.4 837.1 563.9 837.9 564.1 838.7 564 839.5 564 840.3 563.9 841.1 564.2 841.9 564.1 842.7 563.7 843.5 564 844.3 564.2 845.1 563.9 845.9 564.2 846.7 563.8 847.5 564.3 848.3 563.7 849.1 563.9 849.9 564.1 850.7 563.6 851.5 564.1 852.3 564.1 853.1 564.2 853.9 563.9 854.7 563.7 855.5 563.8 856.3 563.9 857.1 563.7 857.9 564.1 858.7 564 859.5 563.7 860.3 563.5 861.1 563.7 861.9 563.7 862.7 563.6 863.5 563.9 864.3 563.5 865.1 563.6 865.9 563.9 866.7 563.8 867.5 563.5 868.3 563.9 869.1 564 869.9 563.5 870.7 563.7 871.5 563.7 872.3 563.5 873.1 563.3 873.9 563.8 874.7 563.7 875.5 563.8 876.3 563.5 877.1 563.4 877.9 563.2 878.7 563.3 879.5 563.3 880.3 563.4 881.1 563.2 881.9 563.4 882.7 563 883.5 563 884.3 562.9 885.1 563.4 885.9 563 886.7 562.9 887.5 563 888.3 562.7 889.1 562.7 889.9 562.8 890.7 562.7 891.5 562.8 892.3 562.6 893.1 563.1 893.9 562.6 894.7 562.6 895.5 562.6 896.3 562.8 897.1 563 897.9 562.5 898.7 562.4 899.5 562.7 900.3 562.7 901.1 562.7 901.9 562.7 902.7 562.3 903.5 562.1 904.3 562.1 905.1 562.4 905.9 562.2 906.7 562.6 907.5 562 908.3 562.3 909.1 562.5 909.9 562 910.7 562.4 911.5 562.3 912.3 562.4 913.1 562.1 913.9 562 914.7 561.8 915.5 562.4 916.3 561.8 917.1 562.3 917.9 562.2 918.7 561.9 919.5 562.1 920.3 562 921.1 561.9 921.9 562.1 922.7 561.7 923.5 562.1 924.3 561.6 925.1 561.6 925.9 561.8 926.7 562.1 927.5 561.6 928.3 562.1 929.1 561.7 929.9 561.8" stroke="#ea10ea" stroke-width="2.3" stroke-linejoin="round" fill="none"/>
<path d="M228.6 562V565.1M270 561.4V566.6M297 561.7V564.9M315.7 562.8V566.8M325 563.4V567.4M363.5 564.3V575.1M381 564.6V569.4M423.8 565.5V569M463 566.4V569.9M479 566.6V569.8M587 571.3V585.6M686.7 566.3V569.5M698 566.1V572.9M736 565V573.8M798.7 564.5V567.7M837 564.1V568.1M873 563.6V572.4M886 563.1V568.3M926.7 561.8V582.5" stroke="#ea5cea" stroke-width="1" fill="none"/><path d="M219 562.2V588M245.8 561.6V588.7M909.5 562.2V585.3" stroke="#e848e0" stroke-width="1.7" fill="none"/>
<path d="M187.5 552.6V592.4H930.0" stroke="#d42020" stroke-width="1.1" fill="none"/>
<path d="M68 100H94.6" stroke="#e67070" stroke-width="1.2"/><path d="M146 100H173" stroke="#e478e4" stroke-width="1.2"/><path d="M224 100H250" stroke="#5c5ce0" stroke-width="1.2"/><path d="M302 100H328.4" stroke="#74e474" stroke-width="1.2"/>
<g font-family='"Liberation Sans",Arial,sans-serif' font-size="10.6" fill="#262626">
<text x="102.4" y="103.6" textLength="22" lengthAdjust="spacingAndGlyphs">BER</text><text x="180.3" y="103.6" textLength="22" lengthAdjust="spacingAndGlyphs">SNR</text><text x="258.2" y="103.6" textLength="32.6" lengthAdjust="spacingAndGlyphs">Quality</text><text x="335.8" y="103.6" textLength="26" lengthAdjust="spacingAndGlyphs">Level</text>
</g>
<path d="M596.3 175.2H629.7V616.3H596.3ZM629.7 175.2L664.2 157.3" stroke="#b43c3c" stroke-width="1" fill="none"/>
<text x="665.2" y="158.9" font-family='"Liberation Sans",Arial,sans-serif' font-size="11.6" fill="#b23232" textLength="113.2" lengthAdjust="spacingAndGlyphs">STORM+proof (shmu.sk)</text>
</svg>
<div class="pb g" style="left:8px;top:617.4px;width:96.8px"></div><div class="t" style='left:10.2px;top:621px;font-size:8.6px;line-height:10px;color:#123a12;letter-spacing:-0.265px'>Present</div><div class="pb g" style="left:8px;top:636.4px;width:96.8px"></div><div class="t" style='left:10.2px;top:640px;font-size:8.5px;line-height:10px;color:#123a12;letter-spacing:-0.300px'>Lock</div><div class="pb " style="left:108.6px;top:617.4px;width:491.6px"><i class="r" style="left:0%;width:10%"></i><i class="y" style="left:10%;width:27%"></i></div><div class="t" style='left:112.7px;top:621px;font-size:8.6px;line-height:10px;color:#2a1515;letter-spacing:-0.277px'>Level: 37%</div><div class="pb " style="left:108.6px;top:636.4px;width:491.6px"><i class="r" style="left:0%;width:10%"></i><i class="y" style="left:10%;width:40%"></i><i class="g" style="left:50%;width:50%"></i></div><div class="t" style='left:112.7px;top:640px;font-size:8.6px;line-height:10px;color:#2a1515;letter-spacing:-0.233px'>Quality: 100%</div><div class="pb " style="left:603.6px;top:617.4px;width:244px"><i class="r" style="left:0%;width:21.4%"></i><i class="y" style="left:21.4%;width:35.800000000000004%"></i><i class="g" style="left:57.2%;width:42.8%"></i></div><div class="t" style='left:606.4px;top:621px;font-size:8.6px;line-height:10px;color:#2a1515;letter-spacing:-0.277px'>preBER: &lt;1.0E-7</div><div class="pb " style="left:851.4px;top:617.4px;width:244.6px"><i class="r" style="left:0%;width:21.2%"></i><i class="y" style="left:21.2%;width:36.099999999999994%"></i><i class="g" style="left:57.3%;width:42.7%"></i></div><div class="t" style='left:854.6px;top:621px;font-size:8.46px;line-height:10px;color:#2a1515;letter-spacing:-0.300px'>BER: &lt;1.0E-7</div><div class="pb " style="left:603.6px;top:636.4px;width:492.4px"><i class="r" style="left:0%;width:20.2%"></i><i class="y" style="left:20.2%;width:19.000000000000004%"></i></div><div class="t" style='left:608.8px;top:640px;font-size:8.6px;line-height:10px;color:#2a1515;letter-spacing:-0.033px'>SNR: 7,8 dB (Margin: 3,8 dB | Poor)</div><div class="pb g" style="left:1100px;top:617.4px;width:97px"></div><div class="t" style='left:1102.2px;top:621px;font-size:8.6px;line-height:10px;color:#123a12;letter-spacing:0.111px'>Input (~235 Kbps)</div><div class="pb g" style="left:1100px;top:636.4px;width:97px"></div><div class="t" style='left:1102.2px;top:641px;font-size:8.15px;line-height:9px;color:#123a12;letter-spacing:-0.300px'>Sync TS</div>
<div id="status"></div><div class="sep" style="left:394px"></div><div class="sep" style="left:794px"></div><div class="sep" style="left:1192px"></div><svg style="position:absolute;left:1193px;top:664px" width="7" height="9" viewBox="0 0 7 9"><path d="M5 1h1.4v1.4H5zM5 4h1.4v1.4H5zM2.4 4h1.4v1.4H2.4zM5 7h1.4v1.4H5zM2.4 7h1.4v1.4H2.4zM0 7h1.2v1.4H0z" fill="#b8b8b8"/></svg>
<div class="t" style='left:142.1px;top:661px;font-size:8.8px;line-height:10px;color:#1c1c1c;letter-spacing:0.203px'>Locked -&gt; Uptime: 25:13:50</div><div class="t" style='left:553.8px;top:661px;font-size:8.8px;line-height:10px;color:#1c1c1c;letter-spacing:-0.182px'>SYNC 0 | TEI 0 | CC 0</div><div class="t" style='left:917.1px;top:661px;font-size:8.8px;line-height:10px;color:#1c1c1c;letter-spacing:0.063px'>Best signal: 8,1 dB (2024-08-18 15:13)</div>
<div id="term"></div>
<div class="t mono" style='left:468.2px;top:4px;font-size:12.3px;line-height:14px;color:#ccc;font-family:"DejaVu Sans Mono","Liberation Mono",monospace'>M</div><div class="t mono" style='left:468.2px;top:19px;font-size:12.3px;line-height:14px;color:#ccc;font-family:"DejaVu Sans Mono","Liberation Mono",monospace'>C</div><div class="t mono" style='left:468.0px;top:46px;font-size:12.3px;line-height:14px;color:#cdcdcd;letter-spacing:-0.024px;font-family:"DejaVu Sans Mono","Liberation Mono",monospace'>C:\Users\Roman Dávid&gt;Signal monitoring_PF 370_LC/SK_Eutelsat 21B-21.5°E_11 602 Atlantic R_18.8.24+</div>
<div class="cn" style="left:476px;width:143px;background:#ff8412"></div><div class="cd" style="left:476px;width:143px"></div><div class="t clip" style='left:478.2px;top:6px;font-size:12px;line-height:14px;color:#4a1400;letter-spacing:-0.242px;font-weight:bold;font-style:italic'>Berlin-Paris-Vienna-Roma</div><div class="t" style='left:478.2px;top:27px;font-size:11.38px;line-height:12px;color:#111;letter-spacing:-0.300px;font-weight:bold'>Mon, Aug 19</div><div class="t" style='left:569.6px;top:27px;font-size:11.21px;line-height:12px;color:#111;letter-spacing:-0.300px;font-weight:bold'>13:10:05</div><div class="cn" style="left:620.3px;width:142px;background:#ee1a2c"></div><div class="cd" style="left:620.3px;width:142px"></div><div class="t" style='left:675.4px;top:6px;font-size:12px;line-height:14px;color:#7c0016;letter-spacing:0.146px;font-weight:bold;font-style:italic'>Dubai</div><div class="t" style='left:622.5px;top:27px;font-size:11.38px;line-height:12px;color:#111;letter-spacing:-0.300px;font-weight:bold'>Mon, Aug 19</div><div class="t" style='left:721.6px;top:27px;font-size:10.82px;line-height:12px;color:#111;letter-spacing:-0.300px;font-weight:bold'>15:10</div><div class="t" style='left:697.6px;top:25px;font-size:7.58px;line-height:9px;color:#111;letter-spacing:-0.300px;font-weight:bold'>+2</div><div class="cn" style="left:763.7px;width:143.3px;background:#22dc34"></div><div class="cd" style="left:763.7px;width:143.3px"></div><div class="t" style='left:810.6px;top:6px;font-size:12px;line-height:14px;color:#084c14;letter-spacing:0.628px;font-weight:bold;font-style:italic'>Moscow</div><div class="t" style='left:765.9px;top:27px;font-size:11.38px;line-height:12px;color:#111;letter-spacing:-0.300px;font-weight:bold'>Mon, Aug 19</div><div class="t" style='left:866.0px;top:27px;font-size:11.01px;line-height:12px;color:#111;letter-spacing:-0.300px;font-weight:bold'>14:10</div><div class="t" style='left:842.6px;top:25px;font-size:7.58px;line-height:9px;color:#111;letter-spacing:-0.300px;font-weight:bold'>+1</div><div class="cn" style="left:909.2px;width:142.2px;background:#2a7ce0"></div><div class="cd" style="left:909.2px;width:142.2px"></div><div class="t" style='left:943.1px;top:6px;font-size:12px;line-height:14px;color:#0a2468;letter-spacing:0.113px;font-weight:bold;font-style:italic'>London, Eng</div><div class="t" style='left:911.4px;top:27px;font-size:11.38px;line-height:12px;color:#111;letter-spacing:-0.300px;font-weight:bold'>Mon, Aug 19</div><div class="t" style='left:1002.3px;top:27px;font-size:11.19px;line-height:12px;color:#111;letter-spacing:-0.300px;font-weight:bold'>12:10:05</div><div class="t" style='left:989.9px;top:25px;font-size:7.6px;line-height:9px;color:#111;letter-spacing:-0.177px;font-weight:bold'>-1</div><div class="cn" style="left:1053px;width:141.5px;background:#2ecece"></div><div class="cd" style="left:1053px;width:141.5px"></div><div class="t" style='left:1071.0px;top:6px;font-size:12px;line-height:14px;color:#084242;letter-spacing:0.294px;font-weight:bold;font-style:italic'>Rabat-Casablanca</div><div class="t" style='left:1055.2px;top:27px;font-size:11.38px;line-height:12px;color:#111;letter-spacing:-0.300px;font-weight:bold'>Mon, Aug 19</div><div class="t" style='left:1154.9px;top:27px;font-size:11.17px;line-height:12px;color:#111;letter-spacing:-0.300px;font-weight:bold'>12:10</div><div class="t" style='left:1131.6px;top:25px;font-size:7.6px;line-height:9px;color:#111;letter-spacing:-0.177px;font-weight:bold'>-1</div><div class="t" style='left:980.6px;top:31px;font-size:7.6px;line-height:9px;color:#222;letter-spacing:0.306px;font-weight:bold'>)ST</div>
</div></body></html>
